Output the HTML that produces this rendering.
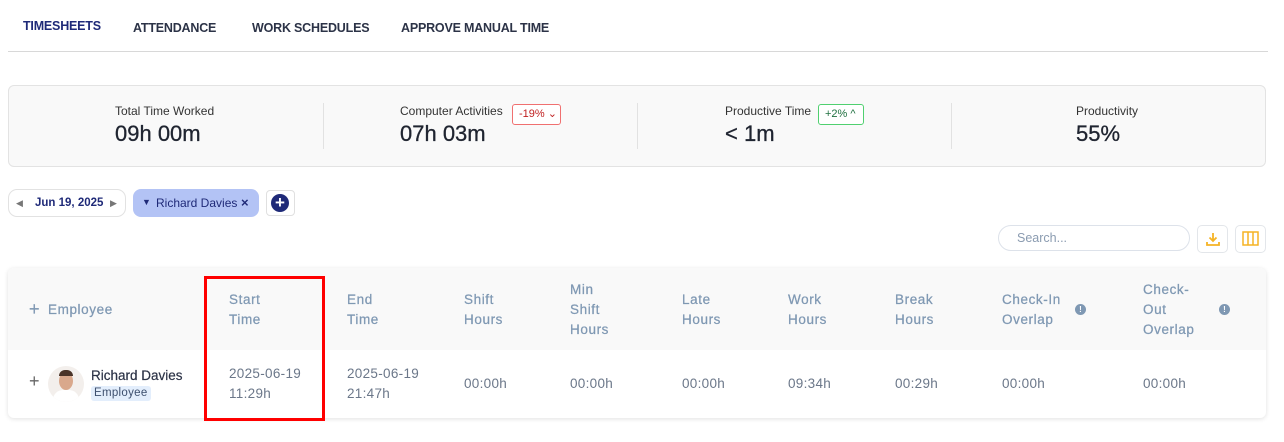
<!DOCTYPE html><html><head><meta charset="utf-8"><style>
*{margin:0;padding:0;box-sizing:border-box}
body{width:1284px;height:442px;background:#fff;font-family:"Liberation Sans",sans-serif;position:relative;overflow:hidden}
.a{position:absolute;white-space:nowrap}
.tab{font-size:12.5px;font-weight:bold;color:#2c3347;top:21px;letter-spacing:-.2px}
.lbl{font-size:12px;color:#333;top:104px}
.val{font-size:22px;color:#1f2430;top:121px;-webkit-text-stroke:.3px #1f2430}
.div{position:absolute;top:103px;width:1px;height:46px;background:#e2e2e2}
.h{font-size:13.5px;color:#7f98b3;letter-spacing:.6px;line-height:20px;-webkit-text-stroke:.25px #7f98b3}
.v{font-size:13.5px;color:#6b7789;letter-spacing:.3px;line-height:20px;top:374px}
</style></head><body>
<div class="a tab" style="left:23px;top:19px;color:#1f2a78">TIMESHEETS</div>
<div class="a tab" style="left:133px">ATTENDANCE</div>
<div class="a tab" style="left:252px">WORK SCHEDULES</div>
<div class="a tab" style="left:401px">APPROVE MANUAL TIME</div>
<div class="a" style="left:8px;top:51px;width:1260px;height:1px;background:#d8d8d8"></div>

<div class="a" style="left:8px;top:85px;width:1258px;height:82px;background:#f9f9f9;border:1px solid #e3e3e3;border-radius:6px"></div>
<div class="div" style="left:323px"></div><div class="div" style="left:637px"></div><div class="div" style="left:951px"></div>
<div class="a lbl" style="left:115px">Total Time Worked</div><div class="a val" style="left:115px">09h 00m</div>
<div class="a lbl" style="left:400px">Computer Activities</div><div class="a val" style="left:400px">07h 03m</div>
<div class="a" style="left:512px;top:104px;width:49px;height:21px;border:1px solid #f07070;border-radius:3px;font-size:11px;color:#c02020;line-height:19px;padding-left:6px;background:#fff">-19% ⌄</div>
<div class="a lbl" style="left:725px">Productive Time</div><div class="a val" style="left:725px">&lt; 1m</div>
<div class="a" style="left:818px;top:104px;width:46px;height:21px;border:1px solid #50d070;border-radius:3px;font-size:11px;color:#207040;line-height:19px;padding-left:6px;background:#fff">+2% ^</div>
<div class="a lbl" style="left:1076px">Productivity</div><div class="a val" style="left:1076px">55%</div>

<div class="a" style="left:8px;top:189px;width:118px;height:28px;border:1px solid #e2e2e2;border-radius:9px;background:#fff"></div>
<div class="a" style="left:16px;top:198px;font-size:9px;color:#777">◀</div>
<div class="a" style="left:35px;top:197px;font-size:11.5px;font-weight:bold;color:#1f2a78">Jun 19, 2025</div>
<div class="a" style="left:110px;top:198px;font-size:9px;color:#777">▶</div>
<div class="a" style="left:133px;top:189px;width:126px;height:28px;background:#b3c3f5;border-radius:8px"></div>
<div class="a" style="left:142px;top:197px;font-size:9px;color:#1f2a78">▼</div>
<div class="a" style="left:156px;top:196px;font-size:12px;color:#1f2a78">Richard Davies</div>
<div class="a" style="left:241px;top:195px;font-size:13px;color:#1f2a78;font-weight:bold">×</div>
<div class="a" style="left:266px;top:190px;width:29px;height:26px;border:1px solid #e0e0e0;border-radius:4px"></div>
<div class="a" style="left:271px;top:194px;width:18px;height:18px;border-radius:50%;background:#1f2a78;color:#fff;font-size:17px;line-height:17px;text-align:center;font-weight:bold">+</div>

<div class="a" style="left:998px;top:225px;width:192px;height:26px;border:1px solid #dde2ea;border-radius:13px"></div>
<div class="a" style="left:1017px;top:231px;font-size:12.5px;color:#8a9bb0">Search...</div>
<div class="a" style="left:1197px;top:225px;width:31px;height:28px;border:1px solid #e3e6ea;border-radius:5px"></div>
<svg class="a" style="left:1205px;top:231px" width="16" height="16" viewBox="0 0 16 16"><path d="M8 2v8M4.5 6.5L8 10l3.5-3.5M2 11v3h12v-3" stroke="#f5b324" stroke-width="1.8" fill="none"/></svg>
<div class="a" style="left:1235px;top:225px;width:31px;height:28px;border:1px solid #e3e6ea;border-radius:5px"></div>
<svg class="a" style="left:1242px;top:231px" width="17" height="15" viewBox="0 0 17 15"><rect x="1" y="1" width="15" height="13" stroke="#f5b324" stroke-width="1.5" fill="none"/><path d="M6 1v13M11 1v13" stroke="#f5b324" stroke-width="1.5"/></svg>

<div class="a" style="left:8px;top:268px;width:1258px;height:150px;background:#fff;border-radius:6px;box-shadow:0 1px 5px rgba(0,0,0,.12);overflow:hidden">
<div style="height:82px;background:#f9f9f9"></div></div>
<div class="a h" style="left:29px;top:299px;font-size:18px">+</div>
<div class="a h" style="left:48px;top:300px">Employee</div>
<div class="a h" style="left:229px;top:290px">Start<br>Time</div>
<div class="a h" style="left:347px;top:290px">End<br>Time</div>
<div class="a h" style="left:464px;top:290px">Shift<br>Hours</div>
<div class="a h" style="left:570px;top:280px">Min<br>Shift<br>Hours</div>
<div class="a h" style="left:682px;top:290px">Late<br>Hours</div>
<div class="a h" style="left:788px;top:290px">Work<br>Hours</div>
<div class="a h" style="left:895px;top:290px">Break<br>Hours</div>
<div class="a h" style="left:1002px;top:290px">Check-In<br>Overlap</div>
<div class="a h" style="left:1143px;top:280px">Check-<br>Out<br>Overlap</div>
<div class="a" style="left:1075px;top:304px;width:11px;height:11px;border-radius:50%;background:#7f98b3;color:#fff;font-size:8px;text-align:center;line-height:11px;font-weight:bold">!</div>
<div class="a" style="left:1219px;top:304px;width:11px;height:11px;border-radius:50%;background:#7f98b3;color:#fff;font-size:8px;text-align:center;line-height:11px;font-weight:bold">!</div>

<div class="a" style="left:29px;top:371px;font-size:18px;color:#666">+</div>
<div class="a" style="left:48px;top:366px;width:36px;height:36px;border-radius:50%;background:#f3efec;overflow:hidden">
<div style="position:absolute;left:11px;top:6px;width:14px;height:18px;border-radius:50%;background:#d9a88c"></div>
<div style="position:absolute;left:11px;top:4px;width:14px;height:6px;border-radius:6px 6px 0 0;background:#4a3328"></div>
<div style="position:absolute;left:5px;top:24px;width:26px;height:14px;border-radius:10px 10px 0 0;background:#fff"></div></div>
<div class="a" style="left:91px;top:368px;font-size:13.5px;color:#2c3347;-webkit-text-stroke:.2px #2c3347">Richard Davies</div>
<div class="a" style="left:91px;top:386px;height:15px;padding:0 3px;background:#e3eefc;border-radius:3px;font-size:11.5px;color:#3d4f6e;line-height:15px;letter-spacing:.3px">Employee</div>
<div class="a v" style="left:229px;top:364px">2025-06-19<br>11:29h</div>
<div class="a v" style="left:347px;top:364px">2025-06-19<br>21:47h</div>
<div class="a v" style="left:464px">00:00h</div>
<div class="a v" style="left:570px">00:00h</div>
<div class="a v" style="left:682px">00:00h</div>
<div class="a v" style="left:788px">09:34h</div>
<div class="a v" style="left:895px">00:29h</div>
<div class="a v" style="left:1002px">00:00h</div>
<div class="a v" style="left:1143px">00:00h</div>

<div class="a" style="left:204px;top:276px;width:121px;height:145px;border:3px solid #f00"></div>
</body></html>
